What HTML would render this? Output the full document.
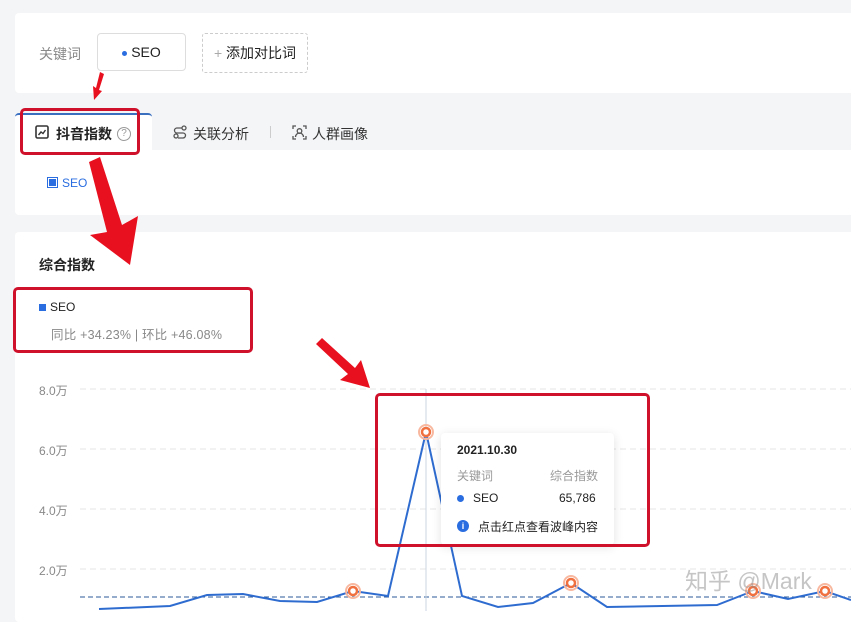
<!DOCTYPE html><html><head><meta charset="utf-8"><style>
body{margin:0;width:851px;height:611px;overflow:hidden;background:#f4f5f7;font-family:"Liberation Sans","Noto Sans CJK SC",sans-serif;position:relative}
.a{position:absolute}
.card{position:absolute;background:#fff;border-radius:4px}
.red{position:absolute;border:3px solid #d0112b;border-radius:5px;box-sizing:border-box}
</style></head><body>
<div class="card" style="left:15px;top:13px;width:840px;height:80px"></div>
<div class="a" style="left:39px;top:44px;font-size:14px;color:#888">关键词</div>
<div class="a" style="left:97px;top:33px;width:89px;height:38px;border:1px solid #ddd;border-radius:4px;box-sizing:border-box;font-size:14px;color:#222;line-height:36px;text-align:center"><span style="display:inline-block;width:5px;height:5px;border-radius:50%;background:#2a6de0;vertical-align:middle;margin-right:4px"></span>SEO</div>
<div class="a" style="left:202px;top:33px;width:106px;height:40px;border:1px dashed #ccc;border-radius:3px;box-sizing:border-box;font-size:14px;color:#222;line-height:38px;text-align:center"><span style="color:#aaa">+</span> 添加对比词</div>
<div class="card" style="left:15px;top:150px;width:840px;height:65px;border-radius:0 0 4px 4px"></div>
<div class="a" style="left:15px;top:113px;width:137px;height:38px;background:#fff;border-top:2px solid #3a6fc0;border-radius:4px 4px 0 0;box-sizing:border-box"></div>
<svg class="a" style="left:35px;top:125px" width="14" height="14"><rect x="1" y="1" width="12" height="12" rx="1.5" fill="none" stroke="#333" stroke-width="1.6"/><polyline points="3.5,10 6,7 8,8.5 10.5,5" fill="none" stroke="#333" stroke-width="1.4"/></svg>
<div class="a" style="left:56px;top:124px;font-size:14px;font-weight:bold;color:#222">抖音指数</div>
<div class="a" style="left:117px;top:127px;width:14px;height:14px;border:1px solid #999;border-radius:50%;box-sizing:border-box;font-size:10px;color:#999;text-align:center;line-height:12px">?</div>
<svg class="a" style="left:173px;top:125px" width="14" height="14"><circle cx="11" cy="3" r="2" fill="none" stroke="#555" stroke-width="1.3"/><circle cx="3" cy="11" r="2" fill="none" stroke="#555" stroke-width="1.3"/><path d="M9 3H4a2.5 2.5 0 0 0 0 5h6a2.5 2.5 0 0 1 0 5H5" fill="none" stroke="#555" stroke-width="1.3"/></svg>
<div class="a" style="left:193px;top:124px;font-size:14px;color:#333">关联分析</div>
<div class="a" style="left:270px;top:126px;width:1px;height:12px;background:#ccc"></div>
<svg class="a" style="left:292px;top:125px" width="15" height="15"><path d="M1 4V1h3M11 1h3v3M14 11v3h-3M4 14H1v-3" fill="none" stroke="#555" stroke-width="1.3"/><circle cx="7.5" cy="6" r="2.3" fill="none" stroke="#555" stroke-width="1.3"/><path d="M3.5 12a4 4 0 0 1 8 0" fill="none" stroke="#555" stroke-width="1.3"/></svg>
<div class="a" style="left:312px;top:124px;font-size:14px;color:#333">人群画像</div>
<div class="a" style="left:47px;top:177px;width:11px;height:11px;border:1.5px solid #2a6de0;box-sizing:border-box;padding:1px"><div style="width:100%;height:100%;background:#2a6de0"></div></div>
<div class="a" style="left:62px;top:176px;font-size:12px;color:#2a6de0">SEO</div>
<div class="card" style="left:15px;top:232px;width:840px;height:390px"></div>
<div class="a" style="left:39px;top:255px;font-size:14px;font-weight:bold;color:#222">综合指数</div>
<div class="a" style="left:39px;top:304px;width:7px;height:7px;background:#2a6de0"></div>
<div class="a" style="left:50px;top:300px;font-size:12px;color:#222">SEO</div>
<div class="a" style="left:51px;top:324px;font-size:12.5px;color:#888;letter-spacing:0.2px">同比 +34.23% | 环比 +46.08%</div>
<div class="a" style="left:39px;top:382px;font-size:12px;color:#888">8.0万</div>
<div class="a" style="left:39px;top:442px;font-size:12px;color:#888">6.0万</div>
<div class="a" style="left:39px;top:502px;font-size:12px;color:#888">4.0万</div>
<div class="a" style="left:39px;top:562px;font-size:12px;color:#888">2.0万</div>
<svg class="a" style="left:0;top:0" width="851" height="611">
<g stroke="#e5e5e5" stroke-dasharray="6 4"><line x1="80" y1="389" x2="851" y2="389"/><line x1="80" y1="449" x2="851" y2="449"/><line x1="80" y1="509" x2="851" y2="509"/><line x1="80" y1="569" x2="851" y2="569"/></g>
<line x1="80" y1="597" x2="851" y2="597" stroke="#2b5a9a" stroke-dasharray="5 3"/>
<line x1="426" y1="389" x2="426" y2="611" stroke="#c8d4e0"/>
<polyline fill="none" stroke="#2f6cd0" stroke-width="2" points="99,609 170,606 207,595 243,594 280,601 317,602 353,591 388,596 426,432 462,596 498,607 533,603 571,583 607,607 717,605 753,591 788,599 825,591 851,600"/>
<g fill="#fff" stroke="#f07040" stroke-width="2.5"><circle cx="426" cy="432" r="4"/><circle cx="353" cy="591" r="4"/><circle cx="571" cy="583" r="4"/><circle cx="753" cy="591" r="4"/><circle cx="825" cy="591" r="4"/></g>
<g fill="none" stroke="#f8b8a0" stroke-width="2"><circle cx="426" cy="432" r="7"/><circle cx="353" cy="591" r="7"/><circle cx="571" cy="583" r="7"/><circle cx="753" cy="591" r="7"/><circle cx="825" cy="591" r="7"/></g>
</svg>
<div class="a" style="left:441px;top:433px;width:173px;height:112px;background:#fff;box-shadow:0 2px 10px rgba(0,0,0,.12);border-radius:4px"></div>
<div class="a" style="left:457px;top:443px;font-size:12px;font-weight:bold;color:#222">2021.10.30</div>
<div class="a" style="left:457px;top:467px;font-size:12px;color:#999">关键词</div>
<div class="a" style="left:550px;top:467px;font-size:12px;color:#999">综合指数</div>
<div class="a" style="left:457px;top:495px;width:7px;height:7px;border-radius:50%;background:#2a6de0"></div>
<div class="a" style="left:473px;top:491px;font-size:12px;color:#222">SEO</div>
<div class="a" style="left:559px;top:491px;font-size:12px;color:#222">65,786</div>
<div class="a" style="left:457px;top:520px;width:12px;height:12px;border-radius:50%;background:#2a6de0;color:#fff;font-size:9px;text-align:center;line-height:12px;font-weight:bold">i</div>
<div class="a" style="left:478px;top:518px;font-size:12px;color:#222">点击红点查看波峰内容</div>
<div class="a" style="left:685px;top:562px;font-size:23px;color:rgba(140,140,140,.5)">知乎 @Mark</div>
<div class="red" style="left:20px;top:108px;width:120px;height:47px"></div>
<div class="red" style="left:13px;top:287px;width:240px;height:66px"></div>
<div class="red" style="left:375px;top:393px;width:275px;height:154px"></div>
<svg class="a" style="left:0;top:0" width="851" height="611"><g fill="#e8101f">
<polygon points="104,74 100,72 96,88 93,86 94,100 102,91 99,90"/>
<polygon points="89,162 100,157 122,225 138,216 130,265 90,235 107,232"/>
<polygon points="316,344 322,338 355,368 361,360 370,388 340,380 348,374"/>
</g></svg>
</body></html>
